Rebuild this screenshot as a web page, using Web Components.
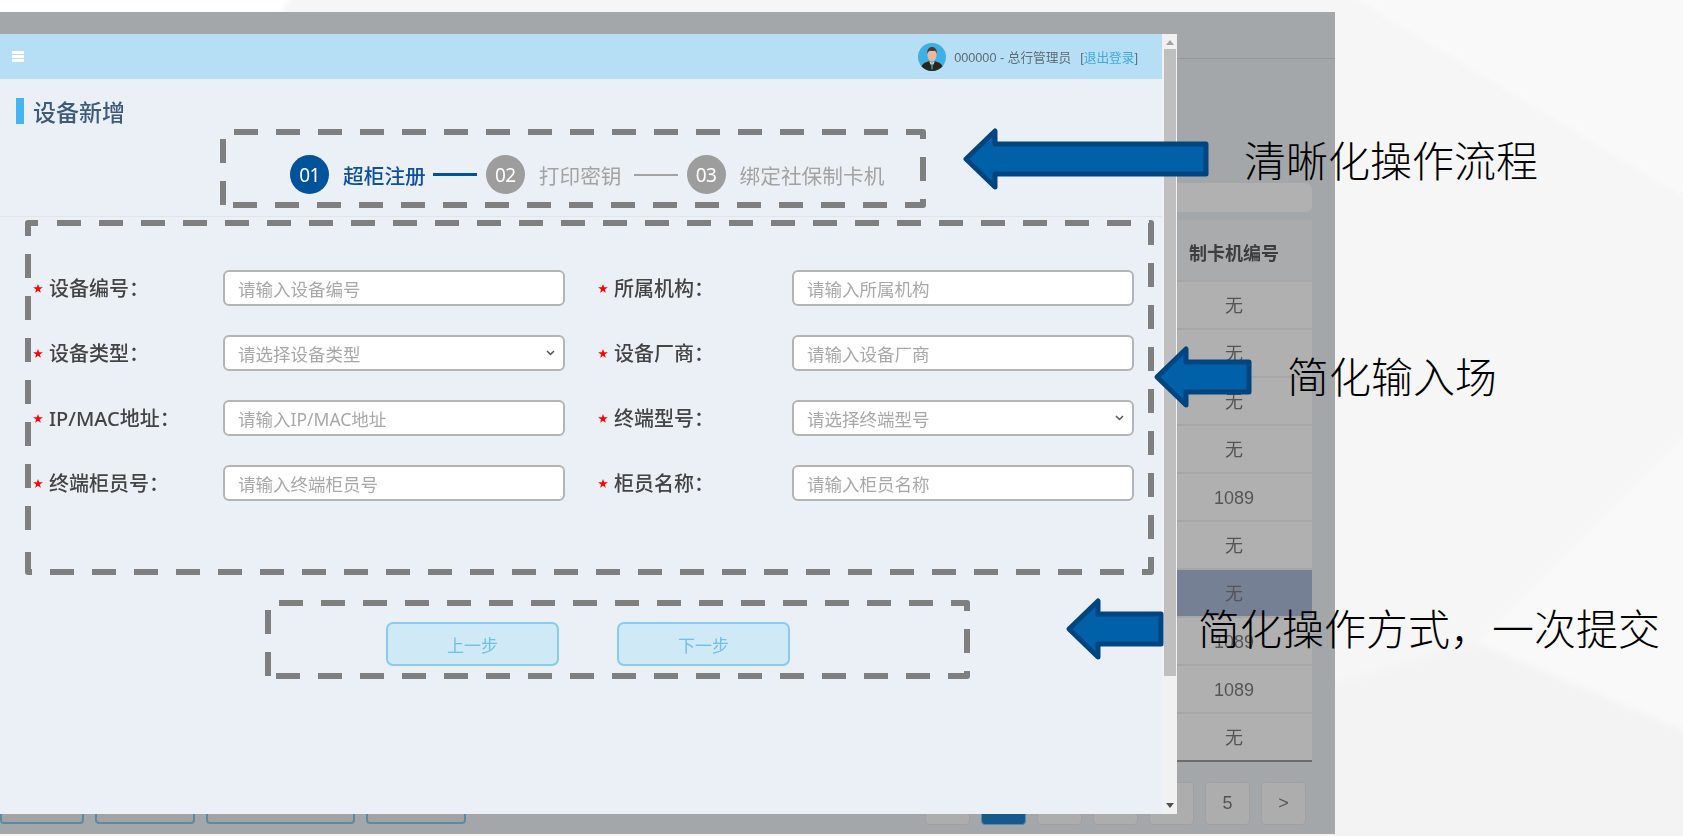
<!DOCTYPE html>
<html lang="zh-CN">
<head>
<meta charset="UTF-8">
<title>设备新增</title>
<style>
  html, body { margin: 0; padding: 0; background: #fafafa; }
  body { font-family: "Liberation Sans", "Noto Sans CJK SC", sans-serif; overflow: hidden; }
</style>
</head>
<body>
<ppt-slide>
  <dimmed-page></dimmed-page>
  <device-dialog slot="dialog">
    <step-bar slot="steps"></step-bar>
    <form-field label="设备编号：" placeholder="请输入设备编号" style="--lw:174px;--sw:16px"></form-field>
    <form-field label="所属机构：" placeholder="请输入所属机构" style="--lw:178px;--sw:16px"></form-field>
    <form-field label="设备类型：" placeholder="请选择设备类型" select style="--lw:174px;--sw:16px"></form-field>
    <form-field label="设备厂商：" placeholder="请输入设备厂商" style="--lw:178px;--sw:16px"></form-field>
    <form-field label="IP/MAC地址：" placeholder="请输入IP/MAC地址" style="--lw:174px;--sw:16px"></form-field>
    <form-field label="终端型号：" placeholder="请选择终端型号" select style="--lw:178px;--sw:16px"></form-field>
    <form-field label="终端柜员号：" placeholder="请输入终端柜员号" style="--lw:174px;--sw:16px"></form-field>
    <form-field label="柜员名称：" placeholder="请输入柜员名称" style="--lw:178px;--sw:16px"></form-field>
  </device-dialog>
  <dash-box slot="notes" d="M234 132H923V205H233M223 205V132H234"></dash-box>
  <dash-box slot="notes" d="M57 223H1151V572H28V548M28 530V223H38"></dash-box>
  <dash-box slot="notes" d="M279 603H967V676H276M268 676V603H279"></dash-box>
  <note-arrow slot="notes" tip="963" mid="159" base="997" end="1209"></note-arrow>
  <note-arrow slot="notes" tip="1154" mid="377" base="1188" end="1252"></note-arrow>
  <note-arrow slot="notes" tip="1066" mid="629" base="1100" end="1164"></note-arrow>
  <note-text slot="notes" x="1244" y="163">清晰化操作流程</note-text>
  <note-text slot="notes" x="1287" y="379">简化输入场</note-text>
  <note-text slot="notes" x="1198" y="631">简化操作方式，一次提交</note-text>
</ppt-slide>

<template id="ppt-slide">
  <style>
    :host { display: block; position: relative; width: 1683px; height: 836px; overflow: hidden; background: #f6f6f6; }
    .bg { position: absolute; inset: 0; width: 100%; height: 100%; }
    .bg g { filter: blur(3px); }
    .page { padding-top: 12px; height: 822px; width: 1335px; position: relative; }
  </style>
  <svg class="bg" viewBox="0 0 1683 836">
    <g>
      <polygon points="-10,-10 296,-10 280,14 -10,14" fill="#ffffff"/>
      <polygon points="1340,-10 1700,-10 1700,207" fill="#f9f9f9"/>
      <polygon points="1700,420 1477,643 1700,737" fill="#f9f9f9"/>
      <polygon points="1330,685 1477,643 1700,737 1700,850 1330,850" fill="#f3f3f3"/>
    </g>
  </svg>
  <div class="page"><slot></slot></div>
  <slot name="dialog"></slot>
  <slot name="notes"></slot>
</template>

<template id="dimmed-page">
  <style>
    :host { display: flex; flex-direction: column; height: 100%; background: #a4a7aa; color: #555; font: 18px "Liberation Sans", "Noto Sans CJK SC", sans-serif; filter: blur(.4px); }
    .top { height: 46px; flex: none; border-bottom: 1px solid #94979a; }
    .search { height: 29px; margin: 124px 23px 8px auto; width: 236px; background: #b1b1b1; border-radius: 6px; flex: none; }
    table { border-collapse: collapse; margin: 0 23px 0 auto; width: 156px; table-layout: fixed; flex: none; }
    th { height: 61px; padding: 4px 0 0; box-sizing: border-box; background: #a9abad; color: #3d3d3d; font-size: 18px; font-weight: bold; text-align: center; }
    td { height: 44px; padding: 2px 0 0; box-sizing: content-box; background: #b0b0b0; border-top: 2px solid #a6a6a6; text-align: center; line-height: 44px; }
    tr.on td { background: #768095; }
    tr:last-child td { border-bottom: 2px solid #6b6b6b; }
    .foot { display: flex; justify-content: space-between; height: 43px; margin-top: 20px; padding-right: 29px; flex: none; }
    .ops, .pager { display: flex; }
    .ops { gap: 11px; align-items: flex-start; }
    .ops i { display: block; height: 38px; border: 2px solid #5b8aa8; border-radius: 4px; background: #a3a3a3; }
    .pager { gap: 11px; }
    .pager span { display: flex; align-items: center; justify-content: center; width: 43px; height: 41px; border: 1px solid #a0a0a0; border-radius: 4px; background: #adadad; color: #555; }
    .pager span.on { background: #17598a; border-color: #5f87a6; }
  </style>
  <div class="top"></div>
  <div class="search"></div>
  <table>
    <tr><th>制卡机编号</th></tr>
    <tr><td>无</td></tr><tr><td>无</td></tr><tr><td>无</td></tr><tr><td>无</td></tr>
    <tr><td>1089</td></tr><tr><td>无</td></tr><tr class="on"><td>无</td></tr>
    <tr><td>1089</td></tr><tr><td>1089</td></tr><tr><td>无</td></tr>
  </table>
  <div class="foot">
    <div class="ops">
      <i style="width:80px"></i><i style="width:96px"></i><i style="width:145px"></i><i style="width:96px"></i>
    </div>
    <div class="pager">
      <span></span><span class="on"></span><span></span><span></span><span></span><span>5</span><span>&gt;</span>
    </div>
  </div>
</template>

<template id="device-dialog">
  <style>
    :host { display: flex; position: absolute; left: 0; top: 34px; width: 1177px; height: 780px; background: #ebf0f7; color: #444; font-family: "Noto Sans", "Noto Sans CJK SC", sans-serif; filter: blur(.4px); }
    .main { flex: 1; min-width: 0; display: flex; flex-direction: column; }
    header { height: 45px; flex: none; display: flex; align-items: center; background: #b6dff5; padding: 0 24px 0 12px; font: 12.700px "Liberation Sans", "Noto Sans CJK SC", sans-serif; color: #5e6b75; }
    .burger { width: 12px; height: 3px; background: #fff; box-shadow: 0 4px 0 #fff, 0 8px 0 #fff; margin-top: -8px; }
    .user { margin-left: auto; display: flex; align-items: center; }
    .user svg { width: 28px; height: 28px; margin-right: 8px; }
    .user b { font-weight: normal; margin-left: 9px; }
    .user a { color: #41a9dc; }
    .title { display: flex; align-items: center; height: 26px; margin: 19px 0 0 16px; font-size: 23px; font-weight: 500; color: #3f5b7a; flex: none; }
    .title::before { content: ""; width: 8px; height: 26px; background: #44b4f3; margin-right: 9px; }
    .steps { flex: none; height: 93px; padding-top: 31px; border-bottom: 1px solid #e2e6eb; box-sizing: border-box; }
    .grid { display: grid; grid-template-columns: 532px 536px; column-gap: 33px; row-gap: 29px; padding: 53px 0 0 33px; flex: none; }
    .actions { display: flex; gap: 58px; margin: 121px 0 0 386px; flex: none; }
    button { width: 173px; height: 44px; box-sizing: border-box; background: #d0e9f7; border: 2px solid #85ccf0; border-radius: 7px; color: #6cc0ef; font: 17px "Noto Sans", "Noto Sans CJK SC", sans-serif; padding: 0; }
    .bar { width: 15px; flex: none; background: #f1f1f1; position: relative; display: flex; flex-direction: column; align-items: center; }
    .bar .up { width: 0; height: 0; border: 4px solid transparent; border-top: 0; border-bottom: 5px solid #a3a3a3; margin-top: 6px; }
    .bar .thumb { width: 12px; height: 627px; background: #bfbfbf; margin-top: 4px; }
    .bar .down { width: 0; height: 0; border: 4px solid transparent; border-bottom: 0; border-top: 5px solid #505050; margin-top: auto; margin-bottom: 6px; }
  </style>
  <div class="main">
    <header>
      <div class="burger"></div>
      <div class="user">
        <svg viewBox="0 0 28 28">
          <circle cx="14" cy="14" r="14" fill="#3fb0e6"/>
          <path d="M3.4 23.200C5 20 8 19 11 18.200L14 20l3-1.800c3 .8 6 1.800 7.600 5A14 14 0 0 1 14 28 14 14 0 0 1 3.400 23.200z" fill="#2b2320"/>
          <path d="M11.200 18.400L14 24l2.800-5.600L14 19.800z" fill="#efe9e2"/>
          <path d="M13.400 20.500h1.200l.5 5-1.100 1.500-1.100-1.500z" fill="#1b8a7a"/>
          <ellipse cx="14" cy="12" rx="4.600" ry="6.500" fill="#e8b99b"/>
          <path d="M9.300 11C8.900 6 11 4 14 4s5.100 2 4.700 7c-.5-2-1-3-2-3.300-1.500.5-3 .5-4.600 0-1 .3-2.300 1.300-2.800 3.300z" fill="#4a3a30"/>
        </svg>
        <span>000000 - 总行管理员</span><b>[<a>退出登录</a>]</b>
      </div>
    </header>
    <div class="title">设备新增</div>
    <div class="steps"><slot name="steps"></slot></div>
    <div class="grid"><slot></slot></div>
    <div class="actions"><button>上一步</button><button>下一步</button></div>
  </div>
  <div class="bar"><i class="up"></i><i class="thumb"></i><i class="down"></i></div>
</template>

<template id="step-bar">
  <style>
    :host { display: flex; align-items: center; padding: 0 0 0 290px; height: 39px; font: 20.700px "Noto Sans", "Noto Sans CJK SC", sans-serif; color: #a3a3a3; }
    .n { width: 39px; height: 39px; border-radius: 50%; background: #9d9d9d; color: #fff; font-size: 19px; letter-spacing: -.5px; display: flex; align-items: center; justify-content: center; flex: none; }
    .t { margin-left: 14px; white-space: nowrap; }
    .l { width: 44px; height: 2px; background: #a3a3a3; margin: 0 9px 0 7px; flex: none; }
    .on.n { background: #00529b; }
    .on.t { color: #0f5199; font-weight: 500; }
    .on.l { background: #00529b; height: 3px; }
    .l.g { margin-left: 12px; }
  </style>
  <span class="n on">01</span><span class="t on">超柜注册</span><i class="l on"></i>
  <span class="n">02</span><span class="t">打印密钥</span><i class="l g"></i>
  <span class="n">03</span><span class="t">绑定社保制卡机</span>
</template>

<template id="form-field">
  <style>
    :host { display: flex; align-items: center; height: 36px; font: 500 20px "Noto Sans", "Noto Sans CJK SC", sans-serif; color: #444; }
    .star { width: var(--sw, 16px); flex: none; color: #f00; font-size: 10px; line-height: 1; }
    .lab { width: var(--lw, 174px); flex: none; white-space: nowrap; padding-bottom: 2px; }
    .box { width: 342px; height: 36px; box-sizing: border-box; flex: none; display: flex; align-items: center; justify-content: space-between; background: #fff; border: 2px solid #b4b4b4; border-radius: 6px; padding: 0 8px 0 13px; color: #a8a8a8; font-size: 17.500px; font-weight: 400; }
    svg { width: 9px; height: 6px; display: none; }
    :host([select]) svg { display: block; }
  </style>
  <span class="star">★</span><span class="lab"></span>
  <div class="box"><span class="ph"></span><svg viewBox="0 0 9 6"><path d="M1 1l3.500 3.500L8 1" fill="none" stroke="#555" stroke-width="1.500"/></svg></div>
</template>

<script>
  class PptSlide extends HTMLElement {
    constructor() {
      super()
      this.attachShadow({ mode: 'open' }).appendChild(document.querySelector('#ppt-slide').content.cloneNode(true))
    }
  }
  class DimmedPage extends HTMLElement {
    constructor() {
      super()
      this.attachShadow({ mode: 'open' }).appendChild(document.querySelector('#dimmed-page').content.cloneNode(true))
    }
  }
  class DeviceDialog extends HTMLElement {
    constructor() {
      super()
      this.attachShadow({ mode: 'open' }).appendChild(document.querySelector('#device-dialog').content.cloneNode(true))
    }
  }
  class StepBar extends HTMLElement {
    constructor() {
      super()
      this.attachShadow({ mode: 'open' }).appendChild(document.querySelector('#step-bar').content.cloneNode(true))
    }
  }
  class FormField extends HTMLElement {
    constructor() {
      super()
      this.attachShadow({ mode: 'open' }).appendChild(document.querySelector('#form-field').content.cloneNode(true))
    }
    connectedCallback() {
      this.shadowRoot.querySelector('.lab').textContent = this.getAttribute('label')
      this.shadowRoot.querySelector('.ph').textContent = this.getAttribute('placeholder')
    }
  }
  // the dashed frames and arrows are drawn on the slide, over the screenshot
  class DashBox extends HTMLElement {
    constructor() {
      super()
      this.attachShadow({ mode: 'open' }).innerHTML = `
        <style>
          :host { display: block; position: absolute; left: 0; top: 0; pointer-events: none; }
          svg { display: block; width: 1683px; height: 836px; }
        </style>
        <svg viewBox="0 0 1683 836"><path fill="none" stroke="#7f7f7f" stroke-width="6" stroke-dasharray="24 18" stroke-linejoin="round"/></svg>`
    }
    connectedCallback() {
      this.shadowRoot.querySelector('path').setAttribute('d', this.getAttribute('d'))
    }
  }
  class NoteArrow extends HTMLElement {
    constructor() {
      super()
      this.attachShadow({ mode: 'open' }).innerHTML = `
        <style>
          :host { display: block; position: absolute; left: 0; top: 0; pointer-events: none; }
          svg { display: block; width: 1683px; height: 836px; }
        </style>
        <svg viewBox="0 0 1683 836"><path fill="#0060a8" stroke="#00457f" stroke-width="5" stroke-linejoin="round"/></svg>`
    }
    connectedCallback() {
      const [tip, mid, base, end] = ['tip', 'mid', 'base', 'end'].map(k => +this.getAttribute(k))
      const d = `M${tip + 3} ${mid}L${base - 2} ${mid - 28}V${mid - 15}H${end - 3}V${mid + 15}H${base - 2}V${mid + 28}Z`
      this.shadowRoot.querySelector('path').setAttribute('d', d)
    }
  }
  class NoteText extends HTMLElement {
    constructor() {
      super()
      this.attachShadow({ mode: 'open' }).innerHTML = `
        <style>
          :host { display: block; position: absolute; white-space: nowrap; color: #000; font: 200 42px/1 "Liberation Serif", "Noto Sans CJK SC", serif; transform: translateY(-50%); }
        </style>
        <slot></slot>`
    }
    connectedCallback() {
      this.style.left = this.getAttribute('x') + 'px'
      this.style.top = this.getAttribute('y') + 'px'
    }
  }
  customElements.define('ppt-slide', PptSlide)
  customElements.define('dimmed-page', DimmedPage)
  customElements.define('device-dialog', DeviceDialog)
  customElements.define('step-bar', StepBar)
  customElements.define('form-field', FormField)
  customElements.define('dash-box', DashBox)
  customElements.define('note-arrow', NoteArrow)
  customElements.define('note-text', NoteText)
</script>
</body>
</html>
